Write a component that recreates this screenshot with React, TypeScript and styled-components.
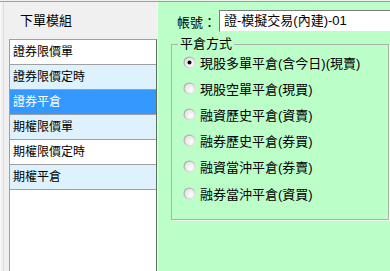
import React from "react";
import styled, { createGlobalStyle } from "styled-components";

const Global = createGlobalStyle`
  html, body { margin: 0; padding: 0; background: #f0f0f0; }
  body { font-family: "Liberation Sans", "Noto Sans CJK TC", sans-serif; color: #000; overflow: hidden; }
  * { box-sizing: border-box; }
`;

const Window = styled.div`
  margin-top: 1px;
  border-top: 1px solid #a0a0a0;
  height: 270px;
  display: flex;
  overflow: hidden;
`;

const LeftPane = styled.div`
  width: 157px;
  flex: none;
  display: flex;
  flex-direction: column;
  padding-left: 8px;
  border-left: 1px solid #f7f7f7;
  box-shadow: inset 2px 0 0 #f0f0f0, inset 3px 0 0 #dcdcdc;
`;

const PaneTitle = styled.div`
  height: 37px;
  line-height: 37px;
  padding-left: 11px;
  font-size: 13px;
`;

const ModuleList = styled.div`
  flex: 1;
  background: #fff;
  border-top: 1px solid #a0a0a0;
  border-left: 1px solid #a0a0a0;
  border-right: 1px solid #5d6b5d;
`;

const ModuleRow = styled.div<{ $tone: "plain" | "alt" | "sel" }>`
  height: 25px;
  line-height: 24px;
  padding-left: 3px;
  font-size: 12px;
  border-bottom: 1px solid #a0a0a0;
  background: ${(p) => (p.$tone === "sel" ? "#3399ff" : p.$tone === "alt" ? "#ddf2fc" : "#ffffff")};
  color: ${(p) => (p.$tone === "sel" ? "#fff" : "#000")};
`;

const RightPane = styled.div`
  flex: 1;
  background: #bcfec8;
  border-left: 1px solid #e4ffe9;
  padding: 8px 1px 0 13px;
  display: flex;
  flex-direction: column;
`;

const AccountRow = styled.div`
  display: flex;
  align-items: center;
  height: 22px;
  margin-left: 6px;
`;

const AccountLabel = styled.span`
  font-size: 13px;
  width: 42px;
  flex: none;
`;

const AccountInput = styled.div`
  flex: 1;
  height: 22px;
  line-height: 19px;
  background: #fff;
  border-top: 1px solid #7a7a7a;
  border-left: 1px solid #7a7a7a;
  border-bottom: 1px solid #e3e3e3;
  padding-left: 4px;
  font-size: 13px;
  white-space: nowrap;
  margin-right: -20px;
`;

const GroupBox = styled.fieldset`
  margin: 4px 0 0 0;
  height: 184px;
  border: 1px solid #a7b5a9;
  box-shadow: 1px 1px 0 #f4fff6;
  padding: 0 0 0 11px;
  min-width: 0;
`;

const Legend = styled.legend`
  font-size: 13px;
  line-height: 16px;
  padding: 0 2px;
  margin-left: -5px;
`;

const OptionList = styled.div`
  display: flex;
  flex-direction: column;
  margin-top: -3px;
`;

const Option = styled.label`
  display: flex;
  align-items: center;
  height: 26.2px;
  font-size: 13px;
  gap: 4px;
`;

const Radio = ({ checked }: { checked?: boolean }) => (
  <svg width="13" height="13" viewBox="0 0 13 13" style={{ flex: "none" }}>
    <defs>
      <linearGradient id="rg" x1="0" y1="0" x2="1" y2="1">
        <stop offset="0" stopColor="#9a9a9a" />
        <stop offset="1" stopColor="#f2f2f2" />
      </linearGradient>
      <radialGradient id="rf" cx="0.65" cy="0.65" r="0.6">
        <stop offset="0" stopColor="#ffffff" />
        <stop offset="1" stopColor="#e6e6e6" />
      </radialGradient>
    </defs>
    <circle cx="6.5" cy="6.5" r="6" fill="url(#rg)" />
    <circle cx="6.5" cy="6.5" r="4.8" fill="url(#rf)" />
    {checked && <circle cx="6.5" cy="6.5" r="2" fill="#000" />}
  </svg>
);

const modules = ["證券限價單", "證券限價定時", "證券平倉", "期權限價單", "期權限價定時", "期權平倉"];
const options = [
  "現股多單平倉(含今日)(現賣)",
  "現股空單平倉(現買)",
  "融資歷史平倉(資賣)",
  "融券歷史平倉(券買)",
  "融資當沖平倉(券賣)",
  "融券當沖平倉(資買)",
];

export default function App() {
  return (
    <>
      <Global />
      <Window>
        <LeftPane>
          <PaneTitle>下單模組</PaneTitle>
          <ModuleList>
            {modules.map((m, i) => (
              <ModuleRow key={m} $tone={i === 2 ? "sel" : i % 2 === 1 ? "alt" : "plain"}>
                {m}
              </ModuleRow>
            ))}
          </ModuleList>
        </LeftPane>
        <RightPane>
          <AccountRow>
            <AccountLabel>帳號：</AccountLabel>
            <AccountInput>證-模擬交易(內建)-01</AccountInput>
          </AccountRow>
          <GroupBox>
            <Legend>平倉方式</Legend>
            <OptionList>
              {options.map((o, i) => (
                <Option key={o}>
                  <Radio checked={i === 0} />
                  {o}
                </Option>
              ))}
            </OptionList>
          </GroupBox>
        </RightPane>
      </Window>
    </>
  );
}
